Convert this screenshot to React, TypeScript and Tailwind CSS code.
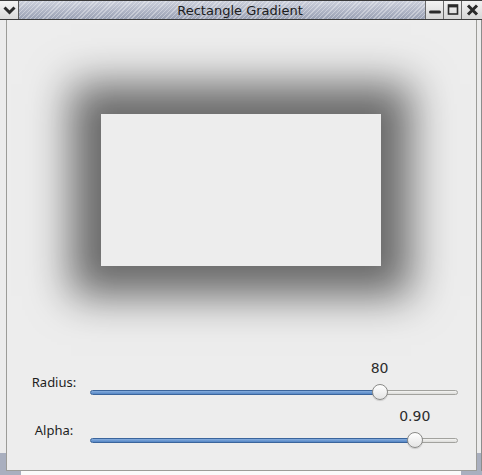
import React from 'react';

const TRACK_W = 368;
const THUMB = 16;

function TitleButton({ children, last }: { children: React.ReactNode; last?: boolean }) {
  return (
    <div
      className={
        'flex items-center justify-center h-full bg-[linear-gradient(#f2f2f2,#d6d6d6)] border-l border-[#6a6a6a] ' +
        (last ? 'w-[21px]' : 'w-[18px]')
      }
    >
      {children}
    </div>
  );
}

function TitleBar() {
  return (
    <div className="flex h-[20px] border-b border-t border-[#3a3a3a] bg-[#3a3a3a]">
      <div className="flex items-center justify-center w-[19px] h-full bg-[linear-gradient(#f4f4f4,#dadada)] border-r border-[#5a5a5a]">
        <svg width="13" height="9" viewBox="0 0 13 9">
          <path d="M1.5 1.5 L6.5 6.5 L11.5 1.5" fill="none" stroke="#2a2a2a" strokeWidth="3" />
        </svg>
      </div>
      <div className="flex-1 flex items-center justify-center pl-[36px] bg-[image:repeating-linear-gradient(-45deg,rgba(255,255,255,0.35)_0px,rgba(255,255,255,0.35)_1px,transparent_1px,transparent_3px),linear-gradient(#cbcfdb,#9aa1b4)]">
        <span className="text-[13px] leading-none text-[#1c1c1c] font-['DejaVu_Sans',sans-serif]">
          Rectangle Gradient
        </span>
      </div>
      <TitleButton>
        <svg width="12" height="12" viewBox="0 0 12 12">
          <path d="M1.5 8 L10.5 8" stroke="#2a2a2a" strokeWidth="3" strokeLinecap="round" />
        </svg>
      </TitleButton>
      <TitleButton>
        <svg width="12" height="12" viewBox="0 0 12 12">
          <rect x="1.5" y="1" width="9" height="9" fill="none" stroke="#2a2a2a" strokeWidth="1.6" />
          <path d="M1 2.2 L11 2.2" stroke="#2a2a2a" strokeWidth="2.4" />
        </svg>
      </TitleButton>
      <TitleButton last>
        <svg width="13" height="12" viewBox="0 0 13 12">
          <path d="M2 1.5 L11 10.5 M11 1.5 L2 10.5" stroke="#2a2a2a" strokeWidth="3" />
        </svg>
      </TitleButton>
    </div>
  );
}

function Slider({ frac, text }: { frac: number; text: string }) {
  const center = THUMB / 2 + frac * (TRACK_W - THUMB);
  return (
    <div className="flex flex-col w-[368px]">
      <div className="relative h-[19px]">
        <span
          className="absolute top-0 -translate-x-1/2 text-[14px] leading-[19px] text-[#2c2c2c] font-['DejaVu_Sans',sans-serif]"
          style={{ left: center }}
        >
          {text}
        </span>
      </div>
      <div className="relative h-[28px] flex items-center">
        <div className="flex w-full h-[5px]">
          <div
            className="h-full rounded-l-full border border-[#3b659c] bg-[linear-gradient(#86aede,#5585c4)]"
            style={{ width: center }}
          />
          <div className="h-full flex-1 rounded-r-full border border-[#a2a29e] bg-[linear-gradient(#f4f4f2,#dcdcda)]" />
        </div>
        <div
          className="absolute top-[6px] w-4 h-4 rounded-full border border-[#8a8a88] bg-[linear-gradient(#ffffff,#e4e4e4)] shadow-[0_1px_1px_rgba(0,0,0,0.15)]"
          style={{ left: center - THUMB / 2 }}
        />
      </div>
    </div>
  );
}

function Row({ label, frac, text }: { label: string; frac: number; text: string }) {
  return (
    <div className="flex items-center pl-[13px]">
      <div className="w-[68px] mr-[2px] text-center text-[13px] leading-[19px] text-[#1e1e1e] font-['Noto_Sans',sans-serif]">
        {label}
      </div>
      <Slider frac={frac} text={text} />
    </div>
  );
}

export default function App() {
  return (
    <div className="w-[482px] h-[475px] flex flex-col bg-[#eeeeee] overflow-hidden">
      <TitleBar />
      <div className="flex flex-1">
        <div className="flex flex-col w-[6px]">
          <div className="flex-1 bg-[#ececec]" />
          <div className="h-[18px] bg-[#a9afbf]" />
        </div>
        <div className="flex-1 flex flex-col bg-[#ededed] border-l border-r border-b border-[#9c9c98]">
          <div className="h-[339px] flex justify-center pt-[94px] pr-[1px]">
            <div className="w-[280px] h-[152px] bg-[#ededed] shadow-[0_0_40px_30px_rgba(0,0,0,0.56)]" />
          </div>
          <Row label="Radius:" frac={0.8} text="80" />
          <div className="h-[1px]" />
          <Row label="Alpha:" frac={0.9} text="0.90" />
        </div>
        <div className="flex flex-col w-[5px] border-r border-[#8c8c8c]">
          <div className="flex-1 bg-[#ececec]" />
          <div className="h-[18px] bg-[#a9afbf]" />
        </div>
      </div>
      <div className="flex h-[4px]">
        <div className="w-[21px] bg-[#a9afbf]" />
        <div className="flex-1 bg-[#fafafa]" />
        <div className="w-[21px] bg-[#a9afbf]" />
      </div>
    </div>
  );
}
